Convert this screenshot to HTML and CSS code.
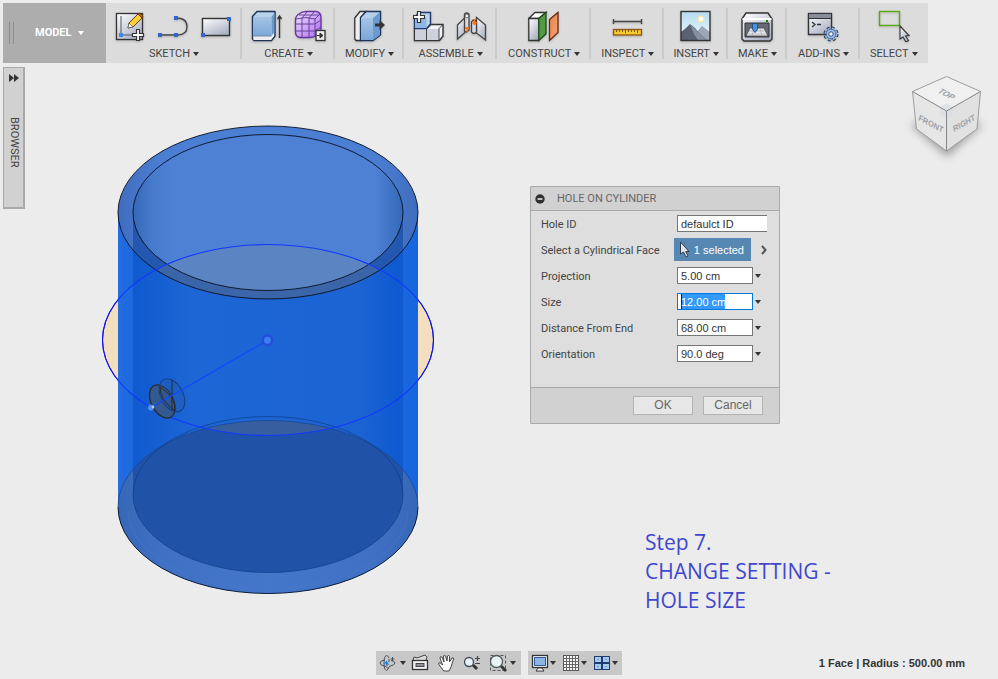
FILE: index.html
```html
<!DOCTYPE html>
<html lang="en">
<head>
<meta charset="utf-8">
<title>Hole on Cylinder</title>
<link rel="stylesheet" href="styles.css">
</head>
<body>
<div class="app">
  <header class="toolbar">
    <button class="workspace" type="button"><span class="grip"></span><span>MODEL</span><span class="caret"></span></button>

    <section class="group snug">
      <div class="icons">
        <svg class="icon" viewBox="0 0 32 32"><rect x="1.5" y="3.5" width="26" height="26" fill="url(#steel)" stroke="#333" stroke-width="1.3"/><path d="M6 6v19h14" fill="none" stroke="#555"/><rect x="4" y="23" width="4" height="4" fill="#3d87ea"/><path d="M13 18l1-5 9-9 4 4-9 9z" fill="#ffd02e" stroke="#5a3a0a"/><path d="M23 4l2-1 3 3-1 2z" fill="#b5622d" stroke="#693615"/><path d="M13 18l1-5 4 4z" fill="#fff" stroke="#555" stroke-width=".7"/><path d="M17.500 23.500h4v-4h3v4h4v3h-4v4h-3v-4h-4z" fill="#fff" stroke="#333" stroke-width="1.2"/></svg>
        <svg class="icon" viewBox="0 0 32 32"><path d="M2 25H20Q29 25 29 16.500T18 8" fill="none" stroke="#484848" stroke-width="1.400"/><g fill="#3367c8"><rect y="23" width="4" height="4"/><rect x="16" y="23" width="4" height="4"/><rect x="16" y="6" width="4" height="4"/></g></svg>
        <svg class="icon" viewBox="0 0 32 32"><rect x="1.500" y="8.500" width="27" height="17" fill="url(#steel)" stroke="#333" stroke-width="1.400"/><g fill="#3367c8"><rect y="23" width="4" height="4"/><rect x="26" y="7" width="4" height="4"/></g></svg>
      </div>
      <button class="menu" type="button">SKETCH<span class="caret"></span></button>
    </section>

    <section class="group snug">
      <div class="icons">
        <svg class="icon" viewBox="0 0 32 32"><path d="M1.500 6.500L6 1.500H24V26L20.500 30.500H3L1.500 29z" fill="#b7d1ec" stroke="#1f3557" stroke-width="1.400" stroke-linejoin="round"/><path d="M2.500 7H20V26H2.500z" fill="url(#blue)"/><path d="M2.500 26H20l3-4v4l-3 4H2.500z" fill="#eceef2"/><path d="M20.500 7L23.500 3V22l-3 4z" fill="#6b98ca"/><path d="M2 26h18.500" stroke="#789"/><path d="M28.500 28V6M26.500 9l2-3 2 3" fill="none" stroke="#333" stroke-width="1.400"/></svg>
        <svg class="icon" viewBox="0 0 32 32"><path d="M1.500 10Q1.500 6 5 4Q8 1.500 12 1.500H22Q27 2 27 8V18Q27 23 23 25Q20 27.500 16 27.500H6Q1.500 27 1.500 22z" fill="url(#violet)" stroke="#65369f" stroke-width="1.400"/><path d="M2 14h19l6-4M2 21h19l6-4M8 27V8l5-6M15 27V8l5-6M21 26V9l5-5M2 9q10-3 19 0M5 5h20" fill="none" stroke="#68409b"/><rect x="22" y="20.500" width="9" height="10" fill="#eee" stroke="#333" stroke-width="1.300"/><path d="M23 25.500h4M26 23l3 2.500-3 2.500z" fill="#333" stroke="#333"/></svg>
      </div>
      <button class="menu" type="button">CREATE<span class="caret"></span></button>
    </section>

    <section class="group">
      <div class="icons">
        <svg class="icon" viewBox="0 0 32 32"><path d="M.800 8L6 1.500H12L7 8V30.500H2L.800 29z" fill="#eceef4" stroke="#333" stroke-width="1.300"/><path d="M6.500 7.500L12 1.500H26.500V25L19 30.500H6.500z" fill="#b5d0ec" stroke="#1f3557" stroke-width="1.400"/><path d="M7.200 8H19V30H7.200z" fill="url(#blue)"/><path d="M19 8l7-6v23l-7 5z" fill="#6c9ccd"/><path d="M21 13.500h4.500v-3.500l5.500 5-5.500 5v-3.500H21z" fill="#333"/></svg>
      </div>
      <button class="menu" type="button">MODIFY<span class="caret"></span></button>
    </section>

    <section class="group snug">
      <div class="icons">
        <svg class="icon" viewBox="0 0 32 32"><path d="M1.500 18.500H13.500L18 14.500H30V26L26.500 30.500H1.500z" fill="#f2f3f6" stroke="#333" stroke-width="1.400"/><path d="M2.200 19H13.500V30H2.200zM14 19H26v11H14z" fill="#ced1dc"/><path d="M13.500 18.500v12M26 18.500v12M26 18.500l4-4" fill="none" stroke="#444"/><path d="M1.500 7.500L6 2.500H17.500V14l-4 4.500H1.500z" fill="#bbd5f0" stroke="#1f3b6c" stroke-width="1.400"/><path d="M2.200 8H13.500V18H2.200z" fill="#91b6e1"/><path d="M0.500 5.500H4.500V1.500h3v4h4v3h-4v4h-3v-4h-4z" fill="#fff" stroke="#333" stroke-width="1.200"/></svg>
        <svg class="icon" viewBox="0 0 32 32"><path d="M1.500 15L9 7.500V22.500L1.500 29z" fill="url(#steel)" stroke="#444" stroke-width="1.300"/><path d="M8.500 5Q8.500 3 10.800 3T13 5V20Q11 23 8.500 21z" fill="#d6d8de" stroke="#444" stroke-width="1.300"/><circle cx="10.800" cy="6" r="1.700" fill="#fff" stroke="#555" stroke-width=".8"/><path d="M20.500 7.500L29.500 15V30L20.500 23z" fill="url(#steel)" stroke="#444" stroke-width="1.300"/><path d="M15.500 12Q18 8 20.500 12V22Q18 25 15.500 22z" fill="#d6d8de" stroke="#444" stroke-width="1.300"/><path d="M11 22v-5M9 18h4M18.500 9v6M16.500 13h4" stroke="#ff6e00" stroke-width="1.400"/></svg>
      </div>
      <button class="menu" type="button">ASSEMBLE<span class="caret"></span></button>
    </section>

    <section class="group roomy">
      <div class="icons">
        <svg class="icon" viewBox="0 0 32 32"><path d="M.800 8.500L7 2.500H18L10.500 8.500z" fill="#fff" stroke="#333" stroke-width="1.300"/><path d="M.800 8.500h10v22H.800z" fill="url(#steel)" stroke="#333" stroke-width="1.300"/><path d="M10.800 8.500L18 2.500V24l-7.200 6.500z" fill="#549a45" stroke="#1e4d1b" stroke-width="1.300"/><path d="M21.500 9.500L30 2.500V22.500l-8.500 8z" fill="url(#orange)" stroke="#6a2710" stroke-width="1.300"/></svg>
      </div>
      <button class="menu" type="button">CONSTRUCT<span class="caret"></span></button>
    </section>

    <section class="group">
      <div class="icons">
        <svg class="icon" viewBox="0 0 32 32"><path d="M1.500 11.500h28M1.500 9v5M29.500 9v5" stroke="#444" stroke-width="1.400"/><rect x="1.500" y="19.500" width="28" height="5.500" fill="#f4ca31" stroke="#935411" stroke-width="1.300"/><path d="M4.500 20v2M7.500 20v2M10.500 20v2M13.500 20v3M16.500 20v2M19.500 20v2M22.500 20v2M25.500 20v3" stroke="#805018"/></svg>
      </div>
      <button class="menu" type="button">INSPECT<span class="caret"></span></button>
    </section>

    <section class="group snug">
      <div class="icons">
        <svg class="icon" viewBox="0 0 32 32"><rect x="1" y="1.500" width="29" height="29" fill="url(#sky)"/><path d="M13 26l9-10 8 6v8H13z" fill="#9ca6b4"/><path d="M1 22l5-4 4-4 5 4 4 5 8 7H1z" fill="#596273"/><path d="M10 14l5 5 5 5 7 6h-9l-4-6z" fill="#8790a0"/><circle cx="21" cy="9" r="2.800" fill="#fff" stroke="#ffe49a" stroke-width="1.200"/><rect x="1" y="1.500" width="29" height="29" fill="none" stroke="#333" stroke-width="1.400"/></svg>
      </div>
      <button class="menu" type="button">INSERT<span class="caret"></span></button>
    </section>

    <section class="group">
      <div class="icons">
        <svg class="icon" viewBox="0 0 32 32"><path d="M1 9L5 3H27l4 6V29l-2 2H3l-2-2z" fill="url(#steel)" stroke="#333" stroke-width="1.400"/><path d="M1.500 9h29" stroke="#fff" stroke-width="2"/><path d="M4 13h24v14H4z" fill="#656973" stroke="#333"/><path d="M9 18h14l4 8H5z" fill="#e5e7ec" stroke="#444" stroke-width=".8"/><path d="M8 21h16M6 24h20M13 18l-2 8M19 18l2 8" stroke="#9da1aa" stroke-width=".6"/><path d="M11.500 13.500h5v6l-2.500 3-2.500-3z" fill="#4c91df" stroke="#1e487e" stroke-width=".8"/><rect x="25" y="10" width="2" height="2" fill="#080"/></svg>
      </div>
      <button class="menu" type="button">MAKE<span class="caret"></span></button>
    </section>

    <section class="group roomy">
      <div class="icons">
        <svg class="icon" viewBox="0 0 32 32"><rect x="1.500" y="3.500" width="23" height="21" fill="url(#steel)" stroke="#333" stroke-width="1.400"/><path d="M2 4h22v4H2z" fill="#888e99"/><path d="M2 8.500h22" stroke="#333"/><path d="M5 12l3 2.500L5 17M10 14.500h4" fill="none" stroke="#333" stroke-width="1.300"/><circle cx="24" cy="24" r="6" fill="none" stroke="#263b61" stroke-width="3" stroke-dasharray="2.700 2"/><circle cx="24" cy="24" r="5" fill="#9dbce6" stroke="#344d77"/><circle cx="24" cy="24" r="5.700" fill="none" stroke="#9dbce6" stroke-width="1.500" stroke-dasharray="2.300 2.200"/><circle cx="24" cy="24" r="2.200" fill="#fff" stroke="#344d77"/></svg>
      </div>
      <button class="menu" type="button">ADD-INS<span class="caret"></span></button>
    </section>

    <section class="group">
      <div class="icons">
        <svg class="icon" viewBox="0 0 32 32"><rect x="1.500" y="1.500" width="20" height="14" fill="none" stroke="#59a80f" stroke-width="1.400"/><path d="M22 16v13l3-2 3 5 2.500-1.500-3-4.500 3.500-.5z" fill="url(#steel)" stroke="#333" stroke-width="1.100"/></svg>
      </div>
      <button class="menu" type="button">SELECT<span class="caret"></span></button>
    </section>
  </header>

  <main class="stage">
    <button class="browser-tab" type="button"><svg viewBox="0 0 12 8"><path d="M1 0v8l5-4zM6 0v8l5-4z" fill="#333"/></svg><span>BROWSER</span></button>

    <svg class="model" viewBox="101 125 334 470" role="img" aria-label="Cylinder with hole preview">
      <defs>
        <linearGradient id="steel" x2="0.700" y2="1"><stop stop-color="#fff"/><stop offset="1" stop-color="#aab1c4"/></linearGradient>
        <linearGradient id="blue" x2="0" y2="1"><stop stop-color="#a5c4e5"/><stop offset="1" stop-color="#7aa7d9"/></linearGradient>
        <linearGradient id="violet" x2="1" y2="1"><stop stop-color="#f0e4ff"/><stop offset="1" stop-color="#a86af0"/></linearGradient>
        <linearGradient id="orange" x2="1" y2="1"><stop stop-color="#e7844e"/><stop offset="1" stop-color="#f6a574"/></linearGradient>
        <linearGradient id="sky" x2="0" y2="1"><stop stop-color="#b4dbf1"/><stop offset="1" stop-color="#f1fbfc"/></linearGradient>
        <linearGradient id="wall"><stop stop-color="#2a6ddd"/><stop offset=".02" stop-color="#1e6be0"/><stop offset=".048" stop-color="#1f69dc"/><stop offset=".051" stop-color="#0f5ad0"/><stop offset=".14" stop-color="#165fd1"/><stop offset=".25" stop-color="#1d66d5"/><stop offset=".8" stop-color="#1c64d3"/><stop offset=".93" stop-color="#0f5ad1"/><stop offset=".949" stop-color="#0f5ad0"/><stop offset=".952" stop-color="#1967dd"/><stop offset="1" stop-color="#1766df"/></linearGradient>
        <linearGradient id="bore"><stop stop-color="#3568b5"/><stop offset=".07" stop-color="#477acb"/><stop offset=".15" stop-color="#4e81d4"/><stop offset=".9" stop-color="#4e80d3"/><stop offset="1" stop-color="#3469b7"/></linearGradient>
        <linearGradient id="rim"><stop stop-color="#416dbf"/><stop offset=".15" stop-color="#4b7fd4"/><stop offset=".85" stop-color="#4b7fd4"/><stop offset="1" stop-color="#3f6dbe"/></linearGradient>
        <linearGradient id="base"><stop stop-color="#3767b6"/><stop offset=".15" stop-color="#3f70c4"/><stop offset=".5" stop-color="#4476ca"/><stop offset=".85" stop-color="#3f70c4"/><stop offset="1" stop-color="#3767b6"/></linearGradient>
        <clipPath id="outerTop"><ellipse cx="268" cy="212.500" rx="150" ry="86.500"/></clipPath>
        <clipPath id="innerTop"><ellipse cx="268" cy="212.500" rx="135" ry="78"/></clipPath>
        <clipPath id="outerBase"><ellipse cx="268" cy="507" rx="150" ry="86.500"/></clipPath>
        <clipPath id="innerBase"><path d="M133 400V494.500A135 78 0 0 0 403 494.500V400z"/></clipPath>
        <clipPath id="outside"><path d="M101 125h17v470h-17zM418 125h17v470h-17z"/></clipPath>
      </defs>
      <ellipse cx="268" cy="340" rx="165.500" ry="95.500" fill="#f3dfbf"/>
      <path d="M118 212.500V507A150 86.500 0 0 0 418 507V212.500z" fill="url(#wall)"/>
      <ellipse cx="268" cy="507" rx="150" ry="86.500" fill="url(#base)"/>
      <g clip-path="url(#outerBase)">
        <path d="M133 400V494.500A135 78 0 0 0 403 494.500V400z" fill="#2053a8"/>
        <g clip-path="url(#innerBase)"><ellipse cx="268" cy="340" rx="165.500" ry="95.500" fill="#375f9f"/></g>
        <path d="M128 510A140 78 0 0 0 408 510" fill="none" stroke="#4a7bd0" opacity=".5"/>
      </g>
      <ellipse cx="268" cy="494.500" rx="135" ry="78" fill="none" stroke="#0a357d" stroke-opacity=".6"/>
      <path d="M118 507A150 86.500 0 0 1 418 507" fill="none" stroke="#123f8b" stroke-opacity=".6"/>
      <path d="M118 507A150 86.500 0 0 0 418 507" fill="none" stroke="#071329" stroke-width=".9"/>
      <ellipse cx="268" cy="212.500" rx="150" ry="86.500" fill="url(#rim)"/>
      <g clip-path="url(#outerTop)">
        <path d="M133 212.500H403V310H133z" fill="#2457b0"/>
        <ellipse cx="268" cy="340" rx="165.500" ry="95.500" fill="#3b65a9"/>
      </g>
      <g clip-path="url(#innerTop)">
        <path d="M133 130H403V300H133z" fill="url(#bore)"/>
        <ellipse cx="268" cy="340" rx="165.500" ry="95.500" fill="#5a84c2"/>
      </g>
      <g fill="none" stroke="#08101f" stroke-width=".9">
        <ellipse cx="268" cy="212.500" rx="150" ry="86.500"/>
        <ellipse cx="268" cy="212.500" rx="135" ry="78"/>
      </g>
      <ellipse cx="268" cy="340" rx="165.500" ry="95.500" fill="none" stroke="#1238ff" stroke-width="1.100"/>
      <ellipse cx="268" cy="340" rx="165.500" ry="95.500" fill="none" stroke="#1010d8" clip-path="url(#outside)"/>
      <g fill="#34598f" stroke="#2b2a2b">
        <ellipse cx="162.300" cy="401.500" rx="11" ry="17.800" transform="rotate(-28 162.300 401.500)" stroke-width="1.300"/>
        <ellipse cx="172" cy="395.300" rx="11" ry="17.800" transform="rotate(-28 172 395.300)" fill="#24569d" fill-opacity=".3" stroke="#183e7e"/>
        <path d="M160 387Q160 400 175 411Q176 397 160 387zM172 380v30" fill="none"/>
      </g>
      <path d="M151 407.500L267.500 340.300" stroke="#1048ff" stroke-width="1.200"/>
      <circle cx="267.500" cy="340.300" r="4.700" fill="#3a7ff0" stroke="#244ddb" stroke-width="2.500"/>
      <circle cx="151" cy="407.500" r="3" fill="#568ff0"/><circle cx="153" cy="407" r="1.300" fill="#b6cdf3"/>
    </svg>

    <div class="side">
      <form class="dialog">
        <h2 class="dialog-title"><svg viewBox="0 0 10 10"><circle cx="5" cy="5" r="4.700" fill="#303030"/><path d="M2.500 5h5" stroke="#eee" stroke-width="1.500"/></svg>HOLE ON CYLINDER</h2>
        <div class="fields">
          <div class="field"><label for="hole">Hole ID</label><input id="hole" class="box wide" value="defaulct ID"></div>
          <div class="field"><label for="face">Select a Cylindrical Face</label><button id="face" class="picked" type="button"><svg viewBox="0 0 12 17"><path d="M1.500 1v12l3-2 2.500 5 2-1-2.300-4.500H10z" fill="#e3e6ed" stroke="#303b48"/></svg>1 selected</button><svg class="chevron" viewBox="0 0 6 10"><path d="M1 1l3.500 4L1 9" fill="none" stroke="#555" stroke-width="2"/></svg></div>
          <div class="field"><label for="projection">Projection</label><input id="projection" class="box" value="5.00 cm"><span class="caret"></span></div>
          <div class="field"><label for="size">Size</label><input id="size" class="box active" value="12.00 cm"><span class="caret"></span></div>
          <div class="field"><label for="distance">Distance From End</label><input id="distance" class="box" value="68.00 cm"><span class="caret"></span></div>
          <div class="field"><label for="orientation">Orientation</label><input id="orientation" class="box" value="90.0 deg"><span class="caret"></span></div>
        </div>
        <div class="actions"><button type="button">OK</button><button type="button">Cancel</button></div>
      </form>
      <p class="note">Step 7.<br>CHANGE SETTING -<br>HOLE SIZE</p>
    </div>

    <svg class="cube" viewBox="900 70 93 95" role="img" aria-label="View cube">
      <defs><filter id="soft" x="-50%" y="-50%" width="200%" height="200%"><feGaussianBlur stdDeviation="4"/></filter></defs>
      <path d="M911 125L947 108L982 125L947 157z" fill="#8e8e8e" opacity=".8" filter="url(#soft)"/>
      <path d="M946.500 76.500L980.500 91.500L946.500 111L912.500 91.500z" fill="#f0f0f0"/>
      <path d="M912.500 91.500L946.500 111V151L916.500 129z" fill="#e6e6e6"/>
      <path d="M980.500 91.500L946.500 111V151L977 129z" fill="#e1e1e1"/>
      <path d="M940 107l6.500-4 6.500 4v8l-6.500 4-6.500-4z" fill="#d5dae2" opacity=".6"/>
      <path d="M946.500 76.500L980.500 91.500L977 129L946.500 151L916.500 129L912.500 91.500z" fill="none" stroke="#9c9c9c"/>
      <path d="M912.500 91.500L946.500 111L980.500 91.500M946.500 111V151" fill="none" stroke="#858585"/>
      <g class="face-name"><text transform="translate(918 120) rotate(28) skewX(12)">FRONT</text><text transform="translate(954 132) rotate(-30) skewX(-15)">RIGHT</text><text transform="translate(937 92) rotate(28) skewX(-25)">TOP</text></g>
    </svg>
  </main>

  <footer class="bottom">
    <nav class="view-tools" aria-label="View tools">
      <div class="tools camera">
        <button class="drop" type="button" aria-label="Orbit"><svg viewBox="0 0 18 18"><g fill="none" stroke="#4b5259"><path d="M10 4Q9 1.500 7.500 1.500Q5 2 5 9t2.500 7.500Q9 16 10 13M6 6Q1 6.500 1 9t6 3.500M12 6.500q4 .5 4 2.500t-6 3.500M9.500 10L7 12.500 9.500 15M13.500 3v4M11.500 5h4M10 5v3"/></g><path d="M7.500 7v4M5.500 9h4" stroke="#1687e8" stroke-width="1.500"/></svg><span class="caret"></span></button>
        <button type="button" aria-label="Look at"><svg viewBox="0 0 18 18"><path d="M2 6l1-3 3 1 8-3 2 2-1 3" fill="#ddd" stroke="#444"/><rect x="1.500" y="6.500" width="15" height="9" fill="#f5f5f5" stroke="#333" stroke-width="1.300"/><rect x="5" y="9.500" width="8" height="3" fill="#8d929b" stroke="#444"/></svg></button>
        <button type="button" aria-label="Pan"><svg viewBox="0 0 18 18"><path d="M6 16L1.500 10q0-2 2-1L5.500 11L3 4q0-2 2-1l2 5L6.500 2q1-2 2 0L10 7l.5-5q1.500-1.500 2 .5L12.500 8 15 4q2-.5 1.500 1L14 13l-2 4H7z" fill="#fff" stroke="#444"/></svg></button>
        <button type="button" aria-label="Zoom"><svg viewBox="0 0 18 18"><circle cx="6" cy="8" r="4.500" fill="#e5f3f8" stroke="#434c55" stroke-width="1.300"/><path d="M10 11l4 4" stroke="#333" stroke-width="3"/><path d="M12 4.500h5M14.500 2v5M12 9.500h5" stroke="#444" stroke-width="1.200"/></svg></button>
        <button class="drop" type="button" aria-label="Fit"><svg viewBox="0 0 18 18"><rect x="1.500" y="1.500" width="15" height="15" fill="none" stroke="#555" stroke-dasharray="3 2"/><circle cx="7.500" cy="7.500" r="6" fill="#e8f5f5" stroke="#535b60" stroke-width="1.300"/><path d="M12 12l5 5" stroke="#333" stroke-width="2.800"/></svg><span class="caret"></span></button>
      </div>
      <div class="tools display">
        <button type="button" aria-label="Display settings"><svg viewBox="0 0 18 18"><rect x="1.500" y="1.500" width="15" height="12" fill="#fff" stroke="#333" stroke-width="1.300"/><rect x="3.500" y="3.500" width="11" height="8" fill="#8fb5e4" stroke="#315b99"/><path d="M7 14h4l2 3H5z" fill="#fff" stroke="#333"/></svg><span class="caret"></span></button>
        <button type="button" aria-label="Grid"><svg viewBox="0 0 18 18"><rect x="1.500" y="1.500" width="15" height="15" fill="#f7f7f7" stroke="#555"/><path d="M4.500 1v16M7.500 1v16M10.500 1v16M13.500 1v16M1 4.500h16M1 7.500h16M1 10.500h16M1 13.500h16" stroke="#666"/></svg><span class="caret"></span></button>
        <button type="button" aria-label="Viewports"><svg viewBox="0 0 18 18"><g fill="#a8c8ee" stroke="#1d3d72"><rect x="1.500" y="2.500" width="7" height="6"/><rect x="9.500" y="2.500" width="7" height="6"/><rect x="1.500" y="9.500" width="7" height="6"/><rect x="9.500" y="9.500" width="7" height="6"/></g><path d="M4 5.500h2M12 5.500h2M4 12.500h2M12 12.500h2" fill="none" stroke="#6f9bd2"/></svg><span class="caret"></span></button>
      </div>
    </nav>
    <p class="status">1 Face | Radius : 500.00 mm</p>
  </footer>
</div>
</body>
</html>
```
FILE: styles.css
```css
* { box-sizing: border-box; }
body { margin: 0; background: #ececec; color: #444; font: 11px/14px Roboto, "Liberation Sans", sans-serif; }
button { border: 0; padding: 0; background: none; color: inherit; font: inherit; }
svg { display: block; flex: none; }
p, h2 { margin: 0; }
.app { min-height: 100vh; display: grid; grid-template-rows: auto 1fr auto; }
.caret { display: inline-block; flex: none; border: 3px solid transparent; border-top: 4px solid #333; border-bottom: 0; }

.toolbar { display: flex; justify-self: start; height: 60px; margin: 3px 3px 0; background: #dcdcdc; }
.workspace { display: flex; align-items: center; gap: 6px; width: 103px; padding: 0 6px; background: #adadad; color: #fff; font-weight: 700; }
.workspace .caret { border-top-color: #fff; }
.grip { width: 5px; height: 22px; margin-right: 15px; border: solid #8c8c8c; border-width: 0 1px; }
.group { position: relative; display: flex; flex-direction: column; align-items: center; gap: 5px; padding: 7px 10px 0; }
.group.snug { padding-inline: 9px; }
.group.roomy { padding-inline: 11px; }
.group:not(:last-child)::after { content: ""; position: absolute; right: 0; top: 5px; width: 2px; height: 51px; background: #cbcbcb; }
.icons { display: flex; gap: 11px; }
.icon { width: 32px; height: 32px; filter: drop-shadow(0 1px 1px #0003); }
.menu { display: flex; align-items: center; gap: 3px; white-space: nowrap; }

.stage { position: relative; display: flex; align-items: flex-start; padding-left: 3px; }
.browser-tab { display: flex; flex-direction: column; align-items: center; gap: 35px; width: 22px; height: 142px; margin-top: 4px; padding-top: 6px; background: #d1d1d1; border: 1px solid #a9a9a9; border-width: 1px 2px 2px 1px; }
.browser-tab svg { width: 12px; height: 8px; }
.browser-tab span { writing-mode: vertical-rl; }
.model { width: 334px; height: 470px; margin: 62px 0 0 76px; }
.side { display: flex; flex-direction: column; margin: 123px 0 0 95px; }
.dialog { width: 250px; border: 1px solid #a9a9a9; background: #dedede; border-radius: 1px; }
.dialog-title { display: flex; align-items: center; gap: 12px; height: 24px; padding-left: 4px; background: #d1d1d1; border-bottom: 1px solid #a9a9a9; color: #666; font-size: 11px; font-weight: 400; }
.dialog-title svg { width: 10px; height: 10px; }
.fields { padding: 0 12px 20px 10px; }
.field { display: flex; align-items: center; height: 26px; padding-bottom: 1px; }
.field label { flex: 1; padding-top: 2px; }
.box { width: 76px; height: 17px; padding: 0 3px; border: 1px solid #767676; border-radius: 0; background: #fff; color: #333; font: 11px/15px "Liberation Sans", Arial, sans-serif; outline: 0; }
.box.wide { width: 90px; border-right: 0; }
.box + .caret { margin: 0 6px 0 2px; }
.box.active { border-color: #0078d7; color: #fff; background: linear-gradient(90deg, #222 1px, #3399ff 1px) 3px 0 / 44px 15px no-repeat #fff; }
.picked { display: flex; align-items: center; gap: 3px; height: 23px; padding: 0 7px 0 5px; background: #5788b3; color: #fff; font: 11px/14px "Liberation Sans", Arial, sans-serif; }
.picked svg { width: 12px; height: 17px; }
.chevron { width: 6px; height: 10px; margin-left: 10px; }
.actions { display: flex; justify-content: flex-end; gap: 10px; padding: 8px 16px; border-top: 1px solid #a9a9a9; background: #d1d1d1; }
.actions button { width: 60px; height: 19px; border: 1px solid #b3b3b3; background: #e7e7e7; color: #666; font: 12px/17px "Liberation Sans", Arial, sans-serif; }
.note { margin: 104px 0 0 115px; color: #3f48cc; font: 21px/29px "Open Sans", "Noto Sans", sans-serif; white-space: nowrap; }
.cube { position: absolute; top: 7px; right: 5px; width: 93px; height: 95px; }
.face-name { fill: #9da1a7; font: 700 8px "Liberation Sans", sans-serif; }

.bottom { display: grid; grid-template-columns: 1fr auto 1fr; align-items: center; padding-bottom: 4px; }
.view-tools { grid-column: 2; display: flex; gap: 7px; }
.tools { display: flex; align-items: center; height: 24px; background: #c8c8c8; }
.tools button { display: flex; align-items: center; gap: 1px; }
.tools svg { width: 18px; height: 18px; }
.camera { gap: 8px; padding: 0 8px 0 3px; }
.camera .drop { gap: 3px; margin-right: -3px; }
.display { gap: 6px; padding: 0 4px 0 3px; }
.status { justify-self: end; padding-right: 33px; color: #333; font: 700 11px/14px "Liberation Sans", Arial, sans-serif; white-space: nowrap; }
```
